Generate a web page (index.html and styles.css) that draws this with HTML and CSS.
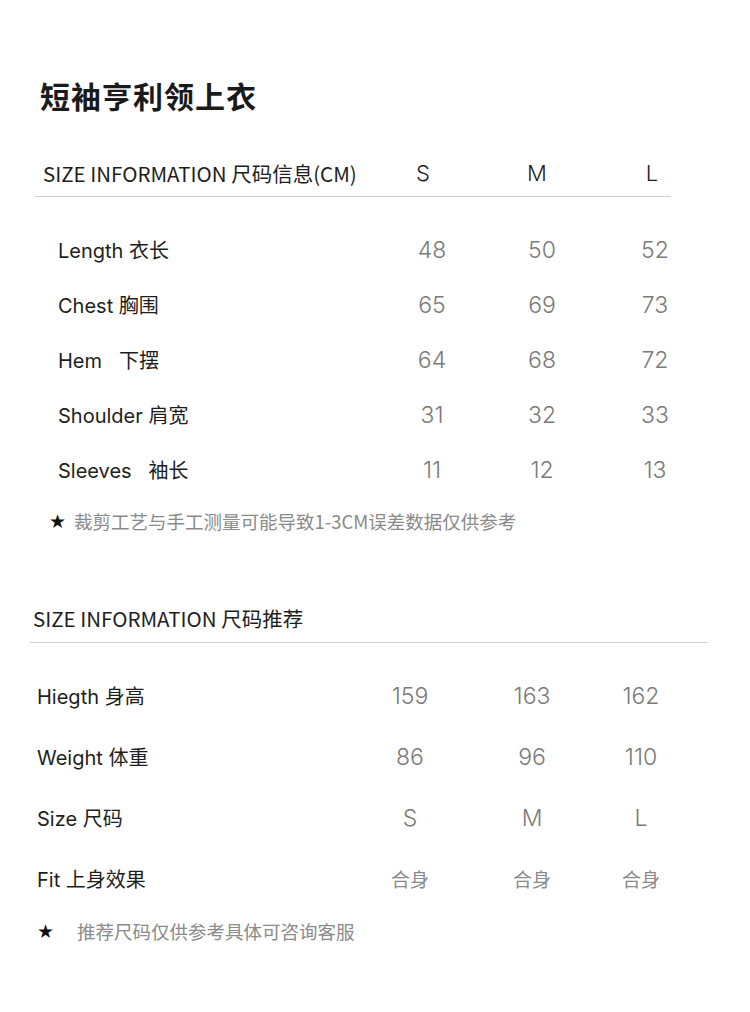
FILE: index.html
```html
<!DOCTYPE html>
<html lang="zh-CN">
<head>
<meta charset="utf-8">
<title>短袖亨利领上衣</title>
<link rel="stylesheet" href="styles.css">
</head>
<body>
<main class="page">
  <h1 class="title">短袖亨利领上衣</h1>

  <section class="measure">
    <div class="m-head">
      <div class="head-label">SIZE INFORMATION 尺码信息(CM)</div>
      <div class="head-size head-s">S</div>
      <div class="head-size head-m">M</div>
      <div class="head-size">L</div>
    </div>
    <div class="m-divider"></div>
    <div class="m-body">
      <div class="m-row"><span class="m-label">Length 衣长</span><span class="num">48</span><span class="num">50</span><span class="num">52</span></div>
      <div class="m-row"><span class="m-label">Chest 胸围</span><span class="num">65</span><span class="num">69</span><span class="num">73</span></div>
      <div class="m-row"><span class="m-label">Hem &nbsp;&nbsp;下摆</span><span class="num">64</span><span class="num">68</span><span class="num">72</span></div>
      <div class="m-row"><span class="m-label">Shoulder 肩宽</span><span class="num">31</span><span class="num">32</span><span class="num">33</span></div>
      <div class="m-row"><span class="m-label">Sleeves &nbsp;&nbsp;袖长</span><span class="num">11</span><span class="num">12</span><span class="num">13</span></div>
    </div>
    <p class="note note-1"><span class="star">★</span><span class="note-text">裁剪工艺与手工测量可能导致1-3CM误差数据仅供参考</span></p>
  </section>

  <section class="recommend">
    <div class="r-head">
      <div class="head-label">SIZE INFORMATION 尺码推荐</div>
    </div>
    <div class="r-divider"></div>
    <div class="r-body">
      <div class="r-row"><span class="r-label">Hiegth 身高</span><span class="num">159</span><span class="num">163</span><span class="num">162</span></div>
      <div class="r-row"><span class="r-label">Weight 体重</span><span class="num">86</span><span class="num">96</span><span class="num">110</span></div>
      <div class="r-row"><span class="r-label">Size 尺码</span><span class="num">S</span><span class="num">M</span><span class="num">L</span></div>
      <div class="r-row"><span class="r-label">Fit 上身效果</span><span class="num cjk">合身</span><span class="num cjk">合身</span><span class="num cjk">合身</span></div>
    </div>
    <p class="note note-2"><span class="star">★</span><span class="note-text">推荐尺码仅供参考具体可咨询客服</span></p>
  </section>
</main>
</body>
</html>
```

FILE: styles.css
```css
* {
  box-sizing: border-box;
  margin: 0;
  padding: 0;
}

body {
  background: #ffffff;
  font-family: Inter, "Noto Sans CJK SC", sans-serif;
  color: #222222;
}

.page {
  width: 750px;
  padding-top: 75px;
  padding-bottom: 60px;
}

.title {
  margin-left: 40px;
  font-family: "Noto Sans CJK SC", sans-serif;
  font-weight: 700;
  font-size: 30px;
  line-height: 40px;
  letter-spacing: 1px;
  color: #1a1a1a;
}

/* ---------- measurement table ---------- */
.measure {
  margin-left: 35px;
  width: 672px;
}

.m-head {
  display: grid;
  grid-template-columns: 1fr 110px 110px 110px;
  align-items: center;
  height: 40px;
  margin-top: 38px;
}

.head-label {
  padding-left: 8px;
  font-family: "Noto Sans CJK SC", sans-serif;
  font-size: 20.5px;
  white-space: nowrap;
  color: #1e1e1e;
}

.head-size {
  text-align: center;
  font-size: 22px;
  font-weight: 300;
  color: #1e1e1e;
}

.head-s {
  padding-right: 18px;
}

.head-m {
  padding-right: 10px;
}

.m-divider {
  width: 636px;
  height: 1px;
  margin-top: 3px;
  background: #cfcfcf;
}

.m-body {
  margin-top: 25px;
}

.m-row {
  display: grid;
  grid-template-columns: 1fr 110px 110px 110px;
  align-items: center;
  height: 55px;
}

.m-row .num:last-child {
  padding-left: 6px;
}

.m-label {
  padding-left: 23px;
  font-size: 20px;
  white-space: nowrap;
  color: #1e1e1e;
}

.num {
  text-align: center;
  font-size: 23px;
  font-weight: 300;
  color: #7a7a7a;
}

.num.cjk {
  font-family: "Noto Sans CJK SC", sans-serif;
  font-size: 19px;
  font-weight: 400;
  color: #8a8a8a;
}

/* ---------- notes ---------- */
.note {
  display: flex;
  align-items: center;
  height: 24px;
  font-family: "Noto Sans CJK SC", sans-serif;
  font-size: 18.5px;
  color: #8a8a8a;
  white-space: nowrap;
}

.star {
  font-family: "DejaVu Sans", sans-serif;
  font-size: 19px;
  color: #111111;
}

.note-1 {
  margin-top: 12px;
  padding-left: 14px;
}

.note-1 .star {
  width: 25px;
}

.note-2 {
  margin-top: 10px;
  padding-left: 7px;
}

.note-2 .star {
  width: 40px;
}

/* ---------- recommendation table ---------- */
.recommend {
  margin-left: 30px;
  width: 678px;
}

.r-head {
  display: flex;
  align-items: center;
  height: 40px;
  margin-top: 65px;
}

.r-head .head-label {
  padding-left: 3px;
}

.r-divider {
  height: 1px;
  margin-top: 4px;
  background: #cfcfcf;
}

.r-body {
  margin-top: 22px;
}

.r-row {
  display: grid;
  grid-template-columns: 325px 110px 134px 84px;
  align-items: center;
  height: 61px;
}

.r-label {
  padding-left: 7px;
  font-size: 20px;
  white-space: nowrap;
  color: #1e1e1e;
}
```
